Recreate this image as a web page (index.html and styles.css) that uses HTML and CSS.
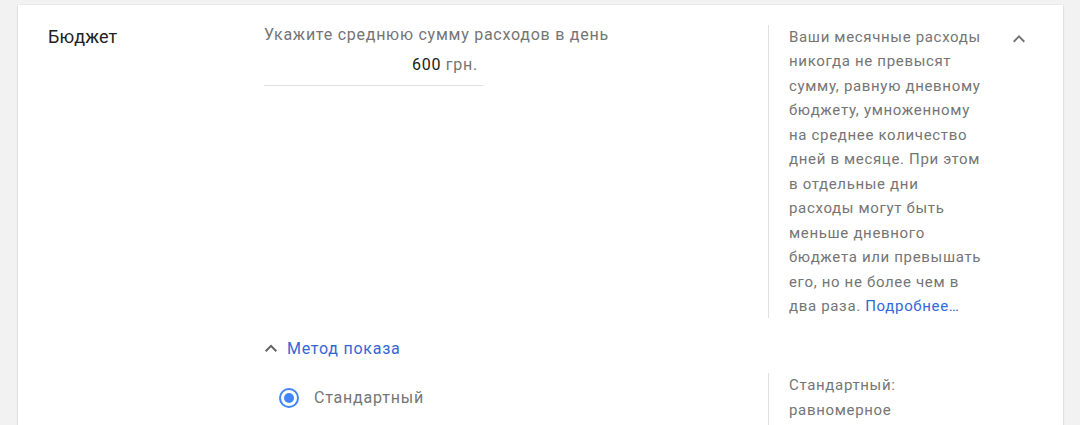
FILE: index.html
```html
<!DOCTYPE html>
<html lang="ru">
<head>
<meta charset="utf-8">
<link rel="stylesheet" href="styles.css">
</head>
<body>
<div class="card">
  <div class="grid">
    <div class="label">Бюджет</div>
    <div class="budget">
      <div class="budget-title">Укажите среднюю сумму расходов в день</div>
      <div class="budget-input"><span class="amount">600</span> <span class="currency">грн.</span></div>
    </div>
    <div class="help">Ваши месячные расходы<br>никогда не превысят<br>сумму, равную дневному<br>бюджету, умноженному<br>на среднее количество<br>дней в месяце. При этом<br>в отдельные дни<br>расходы могут быть<br>меньше дневного<br>бюджета или превышать<br>его, но не более чем в<br>два раза. <a class="link" href="#">Подробнее…</a></div>
    <div class="toggle">
      <svg width="24" height="24" viewBox="0 0 24 24"><path d="M12 8l-6 6 1.41 1.41L12 10.83l4.59 4.58L18 14z" fill="#757575"/></svg>
    </div>

    <div class="method">
      <svg class="method-icon" width="14" height="10" viewBox="5 6.5 14 10"><path d="M12 8l-6 6 1.41 1.41L12 10.83l4.59 4.58L18 14z" fill="#616161"/></svg>
      <span>Метод показа</span>
    </div>

    <div class="radio-row">
      <span class="radio"><span class="radio-dot"></span></span>
      <span class="radio-label">Стандартный</span>
    </div>
    <div class="help help-second">Стандартный:<br>равномерное</div>
  </div>
</div>
</body>
</html>
```

FILE: styles.css
```css
html, body {
  margin: 0;
  padding: 0;
  background: #f2f2f2;
  font-family: Roboto, "Noto Sans", Arial, sans-serif;
  overflow: hidden;
}

.card {
  margin: 5px 0 0 18px;
  width: 1045px;
  height: 600px;
  box-sizing: border-box;
  background: #ffffff;
  padding: 20px 32px 0 30px;
  box-shadow: 0 1px 2px rgba(0, 0, 0, 0.16), 0 0 1px rgba(0, 0, 0, 0.12);
}

.grid {
  display: grid;
  grid-template-columns: 216px 504px 221px 42px;
  align-items: start;
}

.label {
  grid-column: 1;
  grid-row: 1;
  font-size: 18px;
  line-height: 24px;
  letter-spacing: 0.15px;
  color: #212121;
}

.budget {
  grid-column: 2;
  grid-row: 1;
}

.budget-title {
  font-size: 16px;
  line-height: 20px;
  letter-spacing: 0.75px;
  color: #757575;
  white-space: nowrap;
}

.budget-input {
  width: 219px;
  box-sizing: border-box;
  margin-top: 10px;
  padding: 0 5px 10px 0;
  text-align: right;
  font-size: 16px;
  line-height: 20px;
  letter-spacing: 0.75px;
  border-bottom: 1px solid #e0e0e0;
}

.amount {
  color: #212121;
}

.currency {
  color: #757575;
}

.help {
  grid-column: 3;
  grid-row: 1;
  border-left: 1px solid #e0e0e0;
  padding-left: 20px;
  font-size: 15px;
  line-height: 24.45px;
  letter-spacing: 0.67px;
  color: #757575;
  white-space: nowrap;
}

.link {
  color: #3367d6;
  text-decoration: none;
}

.toggle {
  grid-column: 4;
  grid-row: 1;
  display: flex;
  justify-content: flex-end;
  padding-top: 2px;
}

.toggle svg {
  display: block;
}

.method {
  grid-column: 2;
  grid-row: 2;
  margin-top: 19px;
  display: flex;
  align-items: center;
  height: 22px;
  font-size: 16px;
  letter-spacing: 0.75px;
  color: #3367d6;
}

.method-icon {
  display: block;
  margin-right: 9px;
}

.radio-row {
  grid-column: 2;
  grid-row: 3;
  margin-top: 15px;
  padding-top: 14px;
  display: flex;
  align-items: center;
}

.radio {
  width: 20px;
  height: 20px;
  box-sizing: border-box;
  border: 2px solid #4285f4;
  border-radius: 50%;
  margin-left: 15px;
  display: flex;
  align-items: center;
  justify-content: center;
}

.radio-dot {
  width: 10px;
  height: 10px;
  border-radius: 50%;
  background: #4285f4;
}

.radio-label {
  margin-left: 15px;
  font-size: 16px;
  line-height: 20px;
  letter-spacing: 0.8px;
  color: #757575;
}

.help-second {
  grid-row: 3;
  margin-top: 14px;
  padding-bottom: 30px;
}
```
